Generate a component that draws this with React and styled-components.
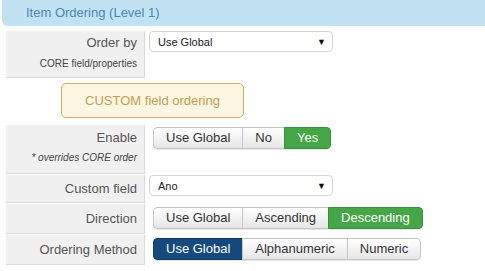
import React from 'react';
import styled, { createGlobalStyle } from 'styled-components';

const GlobalStyle = createGlobalStyle`
  body {
    margin: 0;
    background: #fff;
    font-family: "Liberation Sans", Arial, sans-serif;
  }
`;

const Page = styled.div`
  width: 485px;
  height: 271px;
  overflow: hidden;
`;

const Header = styled.div`
  margin-left: 2px;
  height: 26px;
  line-height: 26px;
  padding-left: 24px;
  background: #c1e2f3;
  color: #4d87b3;
  font-size: 13px;
  border-radius: 0 0 0 6px;
`;

const Form = styled.div`
  display: flex;
  flex-direction: column;
  gap: 1px;
  padding: 5px 0 0 6px;
`;

const Row = styled.div`
  display: flex;
  align-items: stretch;
`;

const Label = styled.div`
  width: 131px;
  flex: none;
  padding: ${(p) => p.$pad || '5px 7px 4px 0'};
  background: #f0f0f0;
  border-right: 1px solid #d9d9d9;
  border-bottom: 1px solid #d9d9d9;
  text-align: right;
  color: #555;
  font-size: 13px;
  line-height: 20px;
`;

const Hint = styled.div`
  font-size: 10px;
  line-height: ${(p) => p.$lh || '20px'};
  color: #444;
  font-style: ${(p) => (p.$italic ? 'italic' : 'normal')};
`;

const Field = styled.div`
  padding-left: ${(p) => p.$pl || '8px'};
  padding-top: ${(p) => p.$pt || '0px'};
`;

const Select = styled.div`
  width: 184px;
  height: 21px;
  box-sizing: border-box;
  border: 1px solid #d4d4d4;
  border-radius: 4px;
  background: #fff;
  display: flex;
  align-items: center;
  justify-content: space-between;
  padding: 0 6px 0 8px;
  font-size: 11px;
  color: #222;
`;

const Arrow = styled.span`
  font-size: 9px;
  color: #111;
`;

const Notice = styled.div`
  margin: 5px 0 7px 61px;
  width: 183px;
  height: 35px;
  box-sizing: border-box;
  border: 1px solid #d9aa5f;
  border-radius: 5px;
  background: #fcf6e2;
  color: #c79c55;
  font-size: 13px;
  display: flex;
  align-items: center;
  justify-content: center;
`;

const Group = styled.div`
  display: inline-flex;
  border-radius: 4px;
  overflow: hidden;
  box-shadow: 0 1px 1px rgba(0, 0, 0, 0.1);
`;

const tones = {
  off: { bg: 'linear-gradient(#ffffff, #e6e6e6)', color: '#333', border: '#c4c4c4' },
  green: { bg: '#46a546', color: '#fff', border: '#3d8f3d' },
  blue: { bg: '#154a7c', color: '#fff', border: '#103b64' },
};

const Btn = styled.div`
  height: 22px;
  box-sizing: border-box;
  padding: 0 12px;
  line-height: 20px;
  font-size: 13px;
  color: ${(p) => tones[p.$tone].color};
  background: ${(p) => tones[p.$tone].bg};
  border: 1px solid ${(p) => tones[p.$tone].border};
  margin-left: -1px;
  &:first-child {
    margin-left: 0;
    border-radius: 4px 0 0 4px;
  }
  &:last-child {
    border-radius: 0 4px 4px 0;
  }
`;

const Toggle = ({ options, active, tone }) => (
  <Group>
    {options.map((o) => (
      <Btn key={o} $tone={o === active ? tone : 'off'}>
        {o}
      </Btn>
    ))}
  </Group>
);

export default function App() {
  return (
    <Page>
      <GlobalStyle />
      <Header>Item Ordering (Level 1)</Header>
      <Form>
        <Row>
          <Label $pad="2px 7px 2px 0">
            Order by
            <Hint $lh="22px">CORE field/properties</Hint>
          </Label>
          <Field $pl="4px">
            <Select>
              Use Global <Arrow>▼</Arrow>
            </Select>
          </Field>
        </Row>
      </Form>
      <Notice>CUSTOM field ordering</Notice>
      <Form style={{ paddingTop: 0 }}>
        <Row>
          <Label $pad="3px 7px 5px 0">
            Enable
            <Hint $italic>* overrides CORE order</Hint>
          </Label>
          <Field $pt="2px">
            <Toggle options={['Use Global', 'No', 'Yes']} active="Yes" tone="green" />
          </Field>
        </Row>
        <Row>
          <Label $pad="4px 7px 3px 0">Custom field</Label>
          <Field $pl="4px" $pt="0px">
            <Select>
              Ano <Arrow>▼</Arrow>
            </Select>
          </Field>
        </Row>
        <Row>
          <Label>Direction</Label>
          <Field $pt="3px">
            <Toggle options={['Use Global', 'Ascending', 'Descending']} active="Descending" tone="green" />
          </Field>
        </Row>
        <Row>
          <Label>Ordering Method</Label>
          <Field $pt="3px">
            <Toggle options={['Use Global', 'Alphanumeric', 'Numeric']} active="Use Global" tone="blue" />
          </Field>
        </Row>
      </Form>
    </Page>
  );
}
